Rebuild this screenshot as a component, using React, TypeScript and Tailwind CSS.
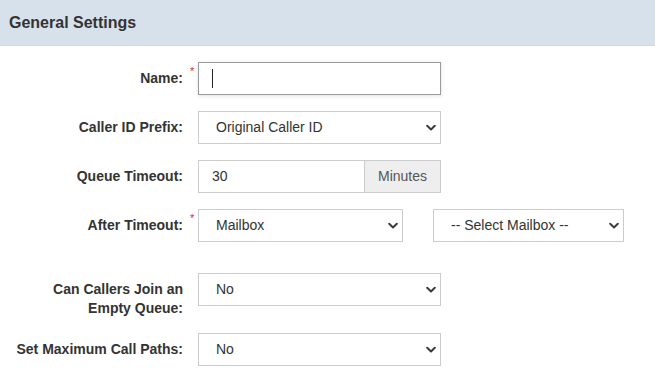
import React from "react";

const Chevron = () => (
  <svg
    className="pointer-events-none absolute right-[5px] top-1/2 -translate-y-1/2"
    width="10"
    height="7"
    viewBox="0 0 10 7"
    fill="none"
  >
    <path d="M1.2 1.3 L5 5 L8.8 1.3" stroke="#3a3a3a" strokeWidth="2" strokeLinecap="round" strokeLinejoin="round" />
  </svg>
);

const Select = ({ value, w }: { value: string; w: string }) => (
  <div className={`relative ${w} h-[33px]`}>
    <select
      defaultValue={value}
      className="h-full w-full appearance-none border border-[#cccccc] bg-white pl-[17px] text-[14px] text-[#333333] outline-none"
    >
      <option>{value}</option>
    </select>
    <Chevron />
  </div>
);

const Star = () => (
  <span className="absolute left-[190px] top-[4px] text-[11px] leading-none text-[#e0262f]">*</span>
);

const Label = ({ children }: { children: React.ReactNode }) => (
  <div className="w-[183px] shrink-0 pt-[7px] text-right text-[14px] font-bold leading-[19px] text-[#333333]">
    {children}
  </div>
);

export default function App() {
  return (
    <div
      className="h-[391px] w-[655px] bg-white"
      style={{ fontFamily: '"Liberation Sans", Arial, Helvetica, sans-serif' }}
    >
      <div className="flex h-[46px] items-center border-b border-[#d0d9e3] bg-[#d7e1eb] pl-[9px] text-[16px] font-bold text-[#333333]">
        General Settings
      </div>
      <div className="pt-[16px]">
        <div className="relative mb-[16px] flex items-start">
          <Label>Name:</Label>
          <Star />
          <div className="ml-[15px] flex h-[33px] w-[243px] items-center border border-[#9a9a9a] bg-white pl-[13px] shadow-[0_1px_4px_rgba(0,0,0,0.12)]">
            <div className="h-[19px] w-px bg-[#222222]" />
          </div>
        </div>
        <div className="relative mb-[16px] flex items-start">
          <Label>Caller ID Prefix:</Label>
          <div className="ml-[15px]">
            <Select value="Original Caller ID" w="w-[243px]" />
          </div>
        </div>
        <div className="relative mb-[16px] flex items-start">
          <Label>Queue Timeout:</Label>
          <div className="ml-[15px] flex h-[33px] w-[243px]">
            <div className="flex flex-1 items-center border border-[#cccccc] bg-white pl-[13px] text-[14px] text-[#333333]">
              30
            </div>
            <div className="flex w-[76px] items-center justify-center border border-l-0 border-[#cccccc] bg-[#eeeeee] text-[14px] text-[#555555]">
              Minutes
            </div>
          </div>
        </div>
        <div className="relative mb-[31px] flex items-start">
          <Label>After Timeout:</Label>
          <Star />
          <div className="ml-[15px] flex gap-[30px]">
            <Select value="Mailbox" w="w-[205px]" />
            <Select value="-- Select Mailbox --" w="w-[191px]" />
          </div>
        </div>
        <div className="relative mb-[15px] flex items-start">
          <Label>
            Can Callers Join an
            <br />
            Empty Queue:
          </Label>
          <div className="ml-[15px]">
            <Select value="No" w="w-[243px]" />
          </div>
        </div>
        <div className="relative flex items-start">
          <Label>Set Maximum Call Paths:</Label>
          <div className="ml-[15px]">
            <Select value="No" w="w-[243px]" />
          </div>
        </div>
      </div>
    </div>
  );
}
